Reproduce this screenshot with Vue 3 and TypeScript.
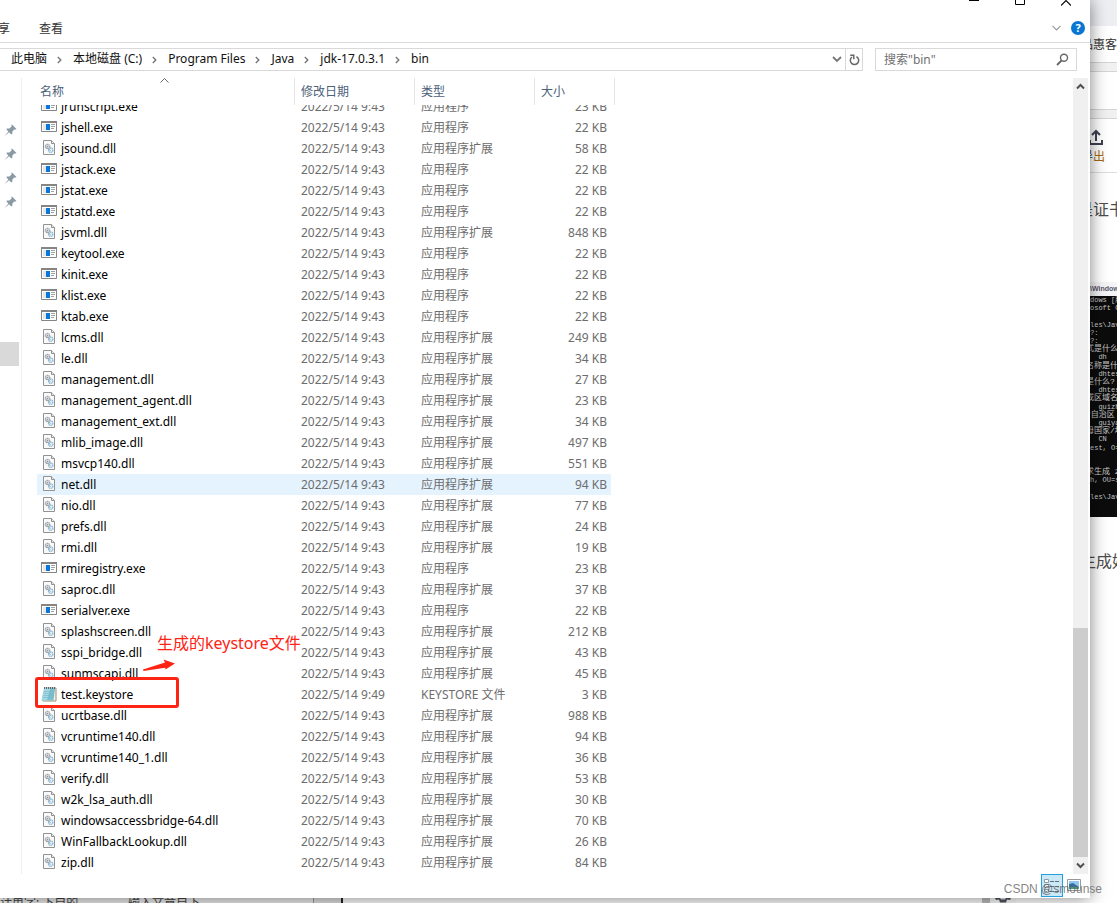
<script setup lang="ts">
type Kind = 'exe' | 'dll' | 'key'
interface FileRow { name: string; size: number; kind: Kind; time: string; type: string }

const listing: [string, number][] = [
  ['jrunscript.exe', 23], ['jshell.exe', 22], ['jsound.dll', 58], ['jstack.exe', 22],
  ['jstat.exe', 22], ['jstatd.exe', 22], ['jsvml.dll', 848], ['keytool.exe', 22],
  ['kinit.exe', 22], ['klist.exe', 22], ['ktab.exe', 22], ['lcms.dll', 249],
  ['le.dll', 34], ['management.dll', 27], ['management_agent.dll', 23],
  ['management_ext.dll', 34], ['mlib_image.dll', 497], ['msvcp140.dll', 551],
  ['net.dll', 94], ['nio.dll', 77], ['prefs.dll', 24], ['rmi.dll', 19],
  ['rmiregistry.exe', 23], ['saproc.dll', 37], ['serialver.exe', 22],
  ['splashscreen.dll', 212], ['sspi_bridge.dll', 43], ['sunmscapi.dll', 45],
  ['test.keystore', 3], ['ucrtbase.dll', 988], ['vcruntime140.dll', 94],
  ['vcruntime140_1.dll', 36], ['verify.dll', 53], ['w2k_lsa_auth.dll', 30],
  ['windowsaccessbridge-64.dll', 70], ['WinFallbackLookup.dll', 26], ['zip.dll', 84],
]

const files: FileRow[] = listing.map(([name, size]) => {
  const kind: Kind = name.endsWith('.exe') ? 'exe' : name.endsWith('.dll') ? 'dll' : 'key'
  return {
    name, size, kind,
    time: kind === 'key' ? '2022/5/14 9:49' : '2022/5/14 9:43',
    type: kind === 'exe' ? '应用程序' : kind === 'dll' ? '应用程序扩展' : 'KEYSTORE 文件',
  }
})

const crumbs = ['此电脑', '本地磁盘 (C:)', 'Program Files', 'Java', 'jdk-17.0.3.1', 'bin']

const consoleLines = [
  'dows [版', 'osoft C', '', 'les\\Jav', '?:', '?:', '式是什么', '  dh', '名称是什', '  dhtest',
  '是什么?', '  dhtest', '或区域名', '  guizho', '/自治区', '  guiyan', '母国家/地', '  CN', 'est, O=',
  '', '', '求生成 2', 'h, OU=s', '', 'les\\Jav',
]
const hasHan = (s: string): boolean => /^\/?[\u4e00-\u9fff]/.test(s)
</script>

<template>
  <div class="desktop">
    <main class="explorer">
      <header class="titlebar">
        <button class="caption" aria-label="最小化"><svg width="10" height="7"><path d="M0 .5h10" stroke="#000" /></svg></button>
        <button class="caption" aria-label="最大化"><svg width="10" height="7"><path d="M.5 0v4.5h9V0" fill="none" stroke="#000" /></svg></button>
        <button class="caption" aria-label="关闭"><svg width="10" height="7"><path d="M0 5.5L5 .5l5 5" fill="none" stroke="#000" stroke-width="1.1" /></svg></button>
      </header>

      <nav class="ribbon">
        <button class="tab share">共享</button>
        <button class="tab">查看</button>
        <span class="grow"></span>
        <button class="expand" aria-label="展开功能区"><svg width="9" height="6"><path d="M.5.8l4 4 4-4" fill="none" stroke="#999" stroke-width="1.2" /></svg></button>
        <button class="help" aria-label="帮助">?</button>
      </nav>

      <div class="location">
        <div class="address">
          <div class="crumbs">
            <template v-for="(c, i) in crumbs" :key="c">
              <svg v-if="i" class="sep" width="5" height="8"><path d="M.8 1l3 3-3 3" fill="none" stroke="#777" stroke-width="1.4" /></svg>
              <button class="crumb">{{ c }}</button>
            </template>
          </div>
          <button class="addr-btn history" aria-label="历史记录"><svg width="10" height="7"><path d="M1 1l4 4 4-4" fill="none" stroke="#777" stroke-width="1.8" /></svg></button>
          <button class="addr-btn refresh" aria-label="刷新">
            <svg width="11" height="12"><path d="M7.4 2.6A4.2 4.2 0 1 1 3 3" fill="none" stroke="#666" stroke-width="1.5" /><path d="M1.2 1.3h3.6v3.9" fill="none" stroke="#666" stroke-width="1.5" /></svg>
          </button>
        </div>
        <label class="search">
          <input type="text" aria-label="搜索" placeholder="搜索&quot;bin&quot;">
          <svg width="13" height="13"><circle cx="8" cy="4.8" r="3.5" fill="none" stroke="#666" stroke-width="1.4" /><path d="M5.5 7.5L1 12" stroke="#666" stroke-width="1.8" /></svg>
        </label>
      </div>

      <div class="body">
        <aside class="pins">
          <span v-for="n in 4" :key="n" class="pin">
            <svg width="12" height="12" viewBox="0 0 12 12"><path d="M7 .5L11.5 5 10 5.7 9.5 5.3 7.4 7.5 7.3 9.7 6.3 10.4 4 8.2.6 11.4.4 11.2 3.4 7.5 1.3 5.3 2 4.4 4.5 4.4 6.7 2.3 6.2 1.5Z" fill="#8c98a2" /></svg>
          </span>
          <span class="pin-current"></span>
        </aside>

        <div class="content">
          <table class="files">
            <thead>
              <tr class="row">
                <th class="sorted">
                  名称
                  <svg class="sort" width="9" height="5"><path d="M.5 4.5l4-4 4 4" fill="none" stroke="#666" /></svg>
                </th>
                <th>修改日期</th>
                <th>类型</th>
                <th>大小</th>
              </tr>
            </thead>
            <tbody>
              <tr v-for="f in files" :key="f.name" class="row" :class="{ hover: f.name === 'net.dll' }">
                <td class="name">
                  <svg v-if="f.kind === 'exe'" class="icon" width="16" height="16">
                    <path d="M.5 2.5h15v10H.5z" fill="#fff" stroke="#858585" />
                    <path d="M0 2h16v2H0z" fill="#858585" />
                    <path d="M2 5h3v6H2z" fill="#e6e6e6" />
                    <path d="M5 5h4v6H5z" fill="#0877d9" />
                    <path d="M10 5.5h4M10 7.5h4M10 9.5h3" stroke="#a0a0a0" />
                  </svg>
                  <svg v-else-if="f.kind === 'dll'" class="icon" width="16" height="16">
                    <path d="M2.5.5h8l3 3v11h-11z" fill="#fafafa" stroke="#929292" />
                    <path d="M10.5.5v3h3" fill="#e8e8e8" stroke="#929292" />
                    <circle cx="6.5" cy="6.5" r="2.2" fill="#e4e6e8" stroke="#9da5ad" stroke-width="1.3" stroke-dasharray="1.3 .4" />
                    <circle cx="6.5" cy="6.5" r=".8" fill="#8995a0" />
                    <circle cx="9.7" cy="10.2" r="2.2" fill="#e0f1fa" stroke="#8fb8d2" stroke-width="1.3" stroke-dasharray="1.3 .4" />
                    <path d="M5.5 7.5l4 3" stroke="#9aa4ac" />
                  </svg>
                  <svg v-else class="icon" width="16" height="16">
                    <path d="M4 2h11v13H2z" fill="#f5f1df" stroke="#9c8f70" />
                    <path d="M3.2 2h11L12.5 14.5H.6z" fill="#7dbfd0" />
                    <path d="M3.2 2h6L6 14.5H.6z" fill="#a5d8e2" />
                    <path d="M3 5.5h10M2.7 7.5h10M2.4 9.5h10M2 11.5h10" stroke="#6cb0c2" stroke-width=".5" />
                    <path d="M3.5 1v2M5.5 1v2M7.5 1v2M9.5 1v2M11.5 1v2M13.5 1v2" stroke="#526b72" />
                  </svg>
                  <span>{{ f.name }}</span>
                </td>
                <td>{{ f.time }}</td>
                <td>{{ f.type }}</td>
                <td class="size">{{ f.size }} KB</td>
              </tr>
            </tbody>
          </table>

          <div class="note-box"></div>
          <svg class="note-arrow" width="34" height="14"><path d="M1 10.5L23 3.5 21.5.5 33 4.5 23.5 10.5 23.2 8.7 1.5 12Z" fill="#fd2414" /></svg>
          <div class="note-text">生成的keystore文件</div>
        </div>

        <div class="scrollbar">
          <button aria-label="向上滚动"><svg width="9" height="7"><path d="M1 5.5L4.5 2 8 5.5" fill="none" stroke="#505050" stroke-width="2" /></svg></button>
          <span class="above"></span>
          <span class="thumb"></span>
          <button aria-label="向下滚动"><svg width="9" height="7"><path d="M1 1.5L4.5 5 8 1.5" fill="none" stroke="#505050" stroke-width="2" /></svg></button>
        </div>
      </div>

      <footer class="status">
        <button class="view active" aria-label="详细信息">
          <svg width="16" height="14"><path d="M.5.5h4v3h-4zM.5 5.5h4v3h-4zM.5 10.5h4v3h-4z" fill="#fff" stroke="#8a9aa3" /><path d="M6 2.5h4M11 2.5h4M6 7.5h4M11 7.5h4M6 12.5h4M11 12.5h4" stroke="#5e6e78" /></svg>
        </button>
        <button class="view" aria-label="大缩略图">
          <svg width="14" height="12"><path d="M.5.5h13v11H.5z" fill="#fff" stroke="#999" /><path d="M2 2h10v8H2z" fill="#8fc7ee" /><path d="M2 5l4-1 6 4v2H2z" fill="#376f9e" /><path d="M2 8h10v2H2z" fill="#4f9b84" /></svg>
        </button>
      </footer>
    </main>

    <aside class="behind">
      <div class="tabstrip"></div>
      <div class="bookmarks"><span>品惠客</span></div>
      <div class="band"></div>
      <div class="heading"></div>
      <div class="band"></div>
      <div class="export">
        <svg width="14" height="16"><path d="M7 12V2M3 6l4-4 4 4M1 11v4h12v-4" fill="none" stroke="#3f4050" stroke-width="2" /></svg>
        <span>导<b>出</b></span>
      </div>
      <div class="article first"><span>是证书</span></div>
      <div class="console">
        <div class="console-title">\Window</div>
        <div class="console-body"><span v-for="(l, i) in consoleLines" :key="i" :class="{ han: hasHan(l) }">{{ l }}</span></div>
      </div>
      <div class="article second"><span>生成好</span></div>
    </aside>

    <div class="below">
      <span class="below-text">计单字: 下自的</span>
      <span class="below-text wide">输入文章自下</span>
      <span class="gutter"></span>
      <span class="editor"></span>
      <span class="slider"></span>
      <svg class="gear" width="26" height="5"><path d="M5 0h16l-1 2-3-.5-1 3h-6l-1-3L6 2z" fill="#505460" /><path d="M10 0h6l-1 1.5h-4z" fill="#eee" /></svg>
      <span class="corner"></span>
    </div>
    <div class="watermark">CSDN @smounse</div>
  </div>
</template>

<style>
body { margin: 0; }
</style>

<style scoped>
.desktop {
  position: relative;
  display: grid;
  grid-template-columns: minmax(0, 1fr) 27px;
  grid-template-rows: minmax(898px, 1fr) 5px;
  min-height: 100vh;
  overflow: hidden;
  font-family: "Noto Sans", "Noto Sans CJK SC", sans-serif;
  font-size: 12px;
  color: #111;
}
button { border: 0; padding: 0; margin: 0; background: none; font: inherit; color: inherit; display: flex; align-items: center; justify-content: center; }
svg { display: block; flex: none; }
.grow { flex: 1; }

.explorer { position: relative; z-index: 1; display: flex; flex-direction: column; min-width: 0; background: #fff; box-shadow: 0 0 16px rgba(0, 0, 0, .5); }
.titlebar { height: 14px; display: flex; justify-content: flex-end; align-items: flex-start; padding-right: 1px; }
.caption { width: 46px; }
.ribbon { height: 28px; display: flex; align-items: center; padding-right: 5px; border-bottom: 1px solid #dadbdc; }
.tab { margin-right: 29px; color: #333; }
.share { width: 10px; justify-content: flex-end; white-space: nowrap; overflow: hidden; }
.expand { width: 20px; height: 20px; }
.help { width: 14px; height: 14px; margin-left: 5px; border-radius: 50%; background: #0877d3; color: #fff; font-weight: 700; font-size: 11px; line-height: 14px; }

.location { display: flex; gap: 12px; padding: 5px 13px 7px 0; }
.address { flex: 1; display: flex; height: 21px; border: 1px solid #d9d9d9; border-left: 0; }
.crumbs { flex: 1; display: flex; align-items: center; padding-left: 11px; }
.crumb { white-space: nowrap; line-height: 16px; margin-bottom: 1px; }
.sep { margin: 0 11px 0 10px; }
.history { width: 16px; }
.refresh { width: 17px; border-left: 1px solid #d9d9d9; }
.search { width: 200px; height: 21px; display: flex; align-items: center; border: 1px solid #d9d9d9; }
.search input { flex: 1; min-width: 0; height: 19px; border: 0; outline: 0; padding: 0 0 0 8px; background: none; font: inherit; }
.search input::placeholder { color: #707070; opacity: 1; }
.search svg { margin-right: 7px; }

.body { flex: 1; display: flex; padding-right: 2px; }
.pins { width: 21px; padding-top: 40px; border-right: 1px solid #f0f0f0; }
.pin { display: flex; height: 24px; align-items: center; padding-left: 5px; }
.pin-current { display: block; width: 19px; height: 24px; margin-top: 128px; background: #d9d9d9; }

.content { position: relative; flex: 1; padding-left: 15px; }
.files, thead, tbody { display: block; }
.row { display: grid; grid-template-columns: 257px 120px 120px 77px; width: 574px; }
thead .row { grid-template-columns: 257px 120px 120px 80px; width: 577px; }
th { position: relative; height: 27px; padding: 0 0 0 7px; border-right: 1px solid #e5e5e5; margin-right: -1px; font-weight: 400; text-align: left; line-height: 27px; color: #4c607a; }
th.sorted { padding-left: 3px; }
.sort { position: absolute; top: 0; left: 123px; }
tbody { overflow: hidden; }
tbody .row:first-child { margin-top: -9px; }
tbody .row { height: 21px; }
td { padding: 0 0 0 7px; line-height: 21px; height: 21px; color: #6d6d6d; white-space: nowrap; }
td.name { display: flex; align-items: center; gap: 4px; padding-left: 4px; color: #000; }
.icon { margin-bottom: 1px; }
td.size { padding: 0 4px 0 0; text-align: right; }
.hover { background: #e5f3ff; }

.note-box { position: absolute; left: 13px; top: 599px; width: 138px; height: 25px; border: 3px solid #fd2414; border-radius: 3px; }
.note-arrow { position: absolute; left: 120px; top: 581px; }
.note-text { position: absolute; left: 135px; top: 553px; font-size: 16px; line-height: 24px; color: #fd2414; white-space: nowrap; }

.scrollbar { width: 15px; display: flex; flex-direction: column; background: #f0f0f0; }
.scrollbar button { height: 17px; }
.above { flex: 533; }
.thumb { flex: 229; background: #cdcdcd; }

.status { height: 24px; display: flex; justify-content: flex-end; align-items: flex-start; gap: 3px; padding-right: 8px; }
.view { width: 16px; height: 22px; }
.view.active { width: 22px; height: 23px; border: 1px solid #26a0da; background: #cbe8f6; }

.behind { grid-column: 2; display: flex; flex-direction: column; min-width: 0; overflow: hidden; background: #fff; }
.behind span { white-space: nowrap; }
.tabstrip { height: 26px; background: #eeeff3; }
.bookmarks { height: 36px; display: flex; align-items: center; justify-content: flex-end; color: #333; }
.band { height: 8px; background: #f1f1f1; border: solid #d5d5d5; border-width: 1px 0; }
.heading { height: 37px; }
.export { height: 46px; padding: 7px 12px 0 0; display: flex; flex-direction: column; align-items: flex-end; justify-content: center; border-bottom: 1px solid #ddd; color: #333; line-height: 24px; }
.export svg { margin-right: 2px; }
.export b { font-weight: 400; color: #a96812; }
.article { display: flex; justify-content: flex-end; font-size: 16px; line-height: 24px; color: #4d4d4d; }
.first { height: 85px; padding-top: 24px; }
.first span { margin-right: -8px; }
.second { padding-top: 32px; }
.second span { margin-right: -11px; }
.console { height: 235px; display: flex; flex-direction: column; background: #0c0c0c; color: #c8c8c8; font-family: "Liberation Mono", "Noto Sans CJK SC", monospace; font-size: 7px; }
.console-title { height: 14px; line-height: 14px; background: #f5f5f7; color: #556; font-family: "Liberation Sans", sans-serif; font-weight: 700; }
.console-body { height: 205px; display: grid; grid-auto-rows: 1fr; }
.console-body span { white-space: pre; line-height: 8px; height: 8px; }
.console-body .han { font-size: 8px; margin-left: -4px; }

.below { grid-column: 1 / -1; height: 5px; display: flex; overflow: hidden; background: #e8e8e8; color: #444; }
.below-text { width: 128px; line-height: 10px; white-space: nowrap; }
.below-text.wide { width: 185px; }
.gutter { width: 27px; border-left: 1px solid #999; border-right: 2px solid #222; background: #ddd; }
.editor { flex: 1; background: #fafafa; }
.slider { width: 8px; background: #bbb; }
.gear { width: 26px; background: #fafafa; }
.corner { width: 101px; background: #fff; }
.watermark { position: absolute; z-index: 2; right: 15px; bottom: 6px; font: 12px/16px "Liberation Sans", sans-serif; color: rgba(90, 90, 90, .75); }
</style>
